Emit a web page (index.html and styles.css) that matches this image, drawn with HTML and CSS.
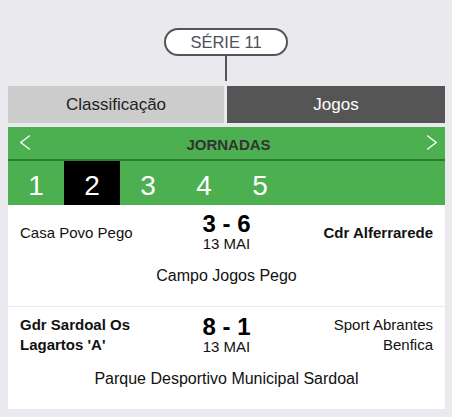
FILE: index.html
```html
<!DOCTYPE html>
<html lang="pt">
<head>
<meta charset="utf-8">
<title>Série 11 - Jogos</title>
<link rel="stylesheet" href="styles.css">
</head>
<body>
<div class="page">
  <div class="serie">
    <div class="pill">SÉRIE 11</div>
    <div class="stem"></div>
  </div>
  <div class="tabs">
    <div class="tab tab-light">Classificação</div>
    <div class="tab tab-dark">Jogos</div>
  </div>
  <div class="jornadas">
    <div class="jhead">
      <svg class="chev chev-left" width="10" height="15" viewBox="0 0 10 15"><path d="M10 0.5 L0.8 7.5 L10 14.5" fill="none" stroke="#fff" stroke-width="1.3"/></svg>
      <span class="jtitle">JORNADAS</span>
      <svg class="chev chev-right" width="10" height="15" viewBox="0 0 10 15"><path d="M0 0.5 L9.2 7.5 L0 14.5" fill="none" stroke="#fff" stroke-width="1.3"/></svg>
    </div>
    <div class="jnums">
      <span class="jnum">1</span>
      <span class="jnum active">2</span>
      <span class="jnum">3</span>
      <span class="jnum">4</span>
      <span class="jnum">5</span>
    </div>
  </div>
  <div class="match">
    <div class="match-row">
      <div class="team team-home">Casa Povo Pego</div>
      <div class="result">
        <div class="score">3 - 6</div>
        <div class="date">13 MAI</div>
      </div>
      <div class="team team-away winner">Cdr Alferrarede</div>
    </div>
    <div class="venue">Campo Jogos Pego</div>
  </div>
  <div class="match match-next">
    <div class="match-row">
      <div class="team team-home winner">Gdr Sardoal Os Lagartos 'A'</div>
      <div class="result">
        <div class="score">8 - 1</div>
        <div class="date">13 MAI</div>
      </div>
      <div class="team team-away">Sport Abrantes Benfica</div>
    </div>
    <div class="venue">Parque Desportivo Municipal Sardoal</div>
  </div>
</div>
</body>
</html>
```

FILE: styles.css
```css
html, body {
  margin: 0;
  padding: 0;
  background: #e9e9ee;
  font-family: "Liberation Sans", Arial, sans-serif;
}

.page {
  padding: 28px 7px 8px 8px;
}

.serie {
  display: flex;
  flex-direction: column;
  align-items: center;
}

.pill {
  box-sizing: border-box;
  width: 124px;
  height: 28px;
  border: 2px solid #555;
  border-radius: 14px;
  background: #fff;
  color: #505058;
  font-size: 16.5px;
  line-height: 24px;
  text-align: center;
  margin-left: -1px;
}

.stem {
  width: 2px;
  height: 25px;
  background: #555;
  margin-left: -1px;
}

.tabs {
  display: grid;
  grid-template-columns: 216px 1fr;
  gap: 3px;
  margin-top: 5px;
}

.tab {
  height: 37px;
  line-height: 37px;
  font-size: 17px;
  text-align: center;
}

.tab-light {
  background: #cccccc;
  color: #222;
}

.tab-dark {
  background: #555555;
  color: #fff;
}

.jornadas {
  margin-top: 4px;
  background: #4caf50;
}

.jhead {
  display: grid;
  grid-template-columns: 1fr auto 1fr;
  align-items: center;
  height: 32px;
  padding: 0 8px 0 12px;
  border-bottom: 2px solid #2f7a33;
}

.chev-left {
  justify-self: start;
  margin-top: -1px;
}

.chev-right {
  justify-self: end;
  margin-top: -1px;
}

.jtitle {
  font-size: 15px;
  font-weight: bold;
  color: #333;
  padding-top: 4px;
  line-height: 28px;
}

.jnums {
  display: flex;
  height: 44px;
}

.jnum {
  width: 56px;
  box-sizing: border-box;
  padding-top: 6px;
  line-height: 38px;
  font-size: 28px;
  color: #fff;
  text-align: center;
}

.jnum.active {
  background: #000;
}

.match {
  background: #fff;
  padding: 8px 12px 21px;
}

.match-next {
  border-top: 1px solid #e9e9ee;
}

.match-row {
  display: grid;
  grid-template-columns: 1fr 1fr 1fr;
  align-items: center;
}

.team {
  font-size: 15px;
  line-height: 20px;
  color: #111;
}

.team-away {
  text-align: right;
}

.winner {
  font-weight: bold;
}

.result {
  text-align: center;
  color: #000;
}

.score {
  font-size: 24px;
  font-weight: bold;
  line-height: 22px;
}

.date {
  font-size: 15px;
  line-height: 17px;
  color: #111;
}

.venue {
  margin-top: 15px;
  font-size: 16px;
  text-align: center;
  color: #111;
}
```
